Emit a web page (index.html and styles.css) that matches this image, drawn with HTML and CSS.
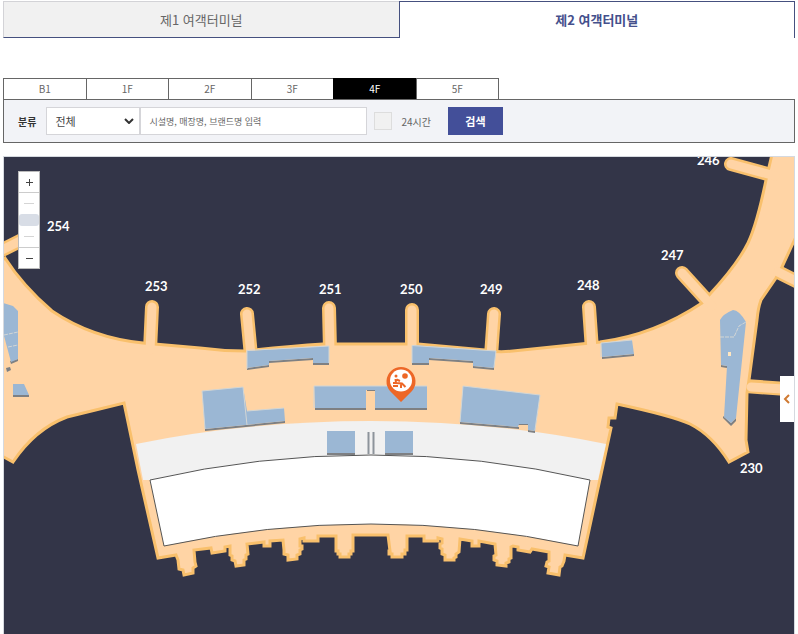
FILE: index.html
```html
<!DOCTYPE html>
<html lang="ko">
<head>
    <meta charset="UTF-8">
    <meta name="viewport" content="width=device-width, initial-scale=1.0">
    <title>여객터미널 지도</title>
    <link rel="stylesheet" href="styles.css">
</head>
<body>
    <nav class="terminals">
        <a href="#t1">제1 여객터미널</a>
        <a href="#t2" class="on">제2 여객터미널</a>
    </nav>

    <nav class="floors">
        <a href="#b1">B1</a>
        <a href="#f1">1F</a>
        <a href="#f2">2F</a>
        <a href="#f3">3F</a>
        <a href="#f4" class="on">4F</a>
        <a href="#f5">5F</a>
    </nav>

    <form class="search">
        <label for="category" class="title">분류</label>
        <select id="category" name="category">
            <option>전체</option>
        </select>
        <input type="text" id="keyword" name="keyword" aria-label="검색어" placeholder="시설명, 매장명, 브랜드명 입력">
        <input type="checkbox" id="allday" name="allday">
        <label for="allday" class="allday">24시간</label>
        <button type="submit">검색</button>
    </form>

    <main class="map">
        <svg class="plan" viewBox="4 157 790 477" role="img" aria-label="4F">
            <!-- boarding bridges, outline -->
            <path class="bridge-edge" d="M152 307 L150 350 M247 314 L251 356 M329 308 L330 350 M412 310 V350 M494 314 L491 356 M589 307 L592 350 M682 273 L712 306 M731 164 L775 176 M0 251 L30 236 M778 272 L800 283 M745 386 L800 390"/>
            <!-- terminal building -->
            <path class="building" d="M0 262 L5 258 Q23 286 52 311 Q92 338 143 343 L200 348 Q222 351 245 351 Q290 346 323 344 H418 L485 350 Q498 353 513 351 L600 342 Q654 335 702 303 L710 294 Q737 265 748 243 Q757 224 766 180 L773 150 H800 V228 L782 267 L776 278 L761 300 Q758 308 757 320 L749 380 L747 393 L746 440 L748 452 L729 462 Q712 435 690 424 Q673 416 617 404 L615 418 H609 L608 427 L611 428 L583 558
                L565 555 L564 561 L562 566 L560 567 L559 575 L548 573 L549 567 L546 566 L547 562 L549 561 L549 552 L532 549 L530 552 L518 550 L518 547 L513 546 L511 547 L511 558 L509 559 V562 L506 563 V566 L497 565 V561 L494 560 V556 L496 555 L495 544 L479 541 V546 H472 V541 L460 539 L459 552 L456 554 V557 L454 558 V560 H445 V555 L442 554 V549 L440 548 V544 L442 543 V539 L438 538 V541 H424 V536 H407 V550 H405 V554 H402 V557 H392 V554 H389 V551 H390 L388 535 H353 V551 H351 V554 H349 V557 H340 V554 H338 V551 H336 V536 H318 V541 H304 V538 L300 539 V546 H302 V549 L300 550 V554 L297 555 V559 L288 560 V555 L284 554 V550 L283 540 L270 541 V546 H264 V542 L247 544 L248 554 L246 555 V559 L244 560 V565 L236 566 L235 561 L232 560 V556 L230 555 L230 546 L225 547 V551 L212 553 L211 548 L194 550 L195 562 L196 566 L193 568 V573 L184 575 L183 570 L179 569 L178 560 L176 555 L158 558
                L138 470 L124 403 L67 417 Q35 429 13 462 L0 455 Z"/>
            <path class="bridge" d="M152 307 L150 350 M247 314 L251 356 M329 308 L330 350 M412 310 V350 M494 314 L491 356 M589 307 L592 350 M682 273 L712 306 M731 164 L775 176 M0 251 L30 236 M778 272 L800 283 M751 387 L800 390"/>
            <path class="hall" d="M136 444 Q250 421 371 421 Q492 421 606 444 L598 480 H143 Z"/>
            <path class="void" d="M150 480 Q258 455 371 455 Q482 455 590 480 L578 546 Q475 524 371 524 Q267 524 164 546 Z"/>

            <!-- shops -->
            <g class="shade">
                <path d="M247 368 L269 365 V367 L247 370 Z M269 361 L313 358 V360 L269 363 Z M313 363 H329 V365 H313 Z"/>
                <path d="M412 363 H429 V365 H412 Z M429 358 L473 361 V363 L429 360 Z M473 366 L494 368 V370 L473 368 Z"/>
                <path d="M205 429 L285 421 V423 L205 431 Z"/>
                <path d="M315 408 H366 V410 H315 Z M375 408 H427 V410 H375 Z M367 390 H375 V391 H367 Z"/>
                <path d="M460 422 L519 427 V429 L460 424 Z M528 430 L535 431 V433 L528 432 Z M518 423 H529 V425 H518 Z"/>
                <path d="M327 453 H355 V455 H327 Z M385 453 H413 V455 H385 Z"/>
                <path d="M602 357 L634 354 V356 L602 359 Z M13 395 H29 V397 H13 Z M10 361 L18 359 V361 L11 364 Z M6 368 L10 367 L11 370 L7 372 Z"/>
                <path d="M721 365 L727 366 V368 L721 367 Z M723 416 L731 423 L736 418 V421 L731 426 L723 418 Z"/>
            </g>
            <g class="shop">
                <path d="M247 351 L329 346 V363 H313 V358 L269 361 V365 L247 368 Z"/>
                <path d="M412 345 L496 351 L494 368 L473 366 V361 L429 358 V363 H412 Z"/>
                <path d="M202 391 L243 387 L247 411 L284 408 L285 421 L205 429 Z"/>
                <path d="M314 386 H375 V390 H366 V408 H315 Z M375 386 H427 V408 H375 Z"/>
                <path d="M463 386 L540 395 L535 431 L528 430 V424 H519 L518 427 L460 422 Z"/>
                <path d="M327 431 H355 V453 H327 Z M385 431 H413 V453 H385 Z"/>
                <path d="M601 343 L632 340 L634 354 L602 357 Z"/>
                <path d="M13 384 H24 L29 395 H13 Z M0 302 L13 306 L18 311 V359 L11 362 L4 336 Z"/>
                <path d="M720 320 Q723 314 733 310 Q739 310 746 322 L736 418 L731 423 L724 417 L727 366 L721 365 Z"/>
            </g>
            <path class="wall" d="M247 369 V350.500 L329 346 V363 M412 363 V345.500 L496 351 L494 367 M205 429 L202 391 L243 387 L247 425 M247 411 L284 408 M460 422 L463 386 L540 395 L535 430 M314 408 V386 H427 M601 357 V343 L632 340"/>
            <path class="wall dashed" d="M720 337 H734 L739 326 L746 322 M4 335 L18 332 M8 347 L18 345"/>
            <path class="gap" d="M728 352 H731 V356 H728 Z"/>
            <path class="rail" d="M368.500 432 V454 M373.500 432 V454"/>

            <g class="gate">
                <text x="697" y="165">246</text>
                <text x="661" y="260">247</text>
                <text x="577" y="290">248</text>
                <text x="480" y="294">249</text>
                <text x="400" y="294">250</text>
                <text x="319" y="294">251</text>
                <text x="238" y="294">252</text>
                <text x="145" y="291">253</text>
                <text x="47" y="231">254</text>
                <text x="740" y="473">230</text>
            </g>

            <!-- facility pin -->
            <g class="pin">
                <path d="M401 402 L390 391 A14.500 14.500 0 1 1 412 391 Z"/>
                <circle class="face" cx="401" cy="380.500" r="11"/>
                <circle cx="405" cy="376" r="2.800"/>
                <circle cx="396" cy="376" r="1.500"/>
                <path class="figure" d="M395.500 379 L396 383 H393 M396 383 L402 383.500 L405.500 387 M396.500 379.500 L400 381 M401 384 V388 M393 386 L398 386"/>
            </g>
        </svg>

        <div class="zoom">
            <button type="button" aria-label="확대">
                <svg viewBox="0 0 9 9"><path d="M1 4.500 H8 M4.500 1 V8"/></svg>
            </button>
            <input type="range" min="1" max="3" value="2" aria-label="배율">
            <button type="button" aria-label="축소">
                <svg viewBox="0 0 9 9"><path d="M1 4.500 H8"/></svg>
            </button>
        </div>
        <button type="button" class="open" aria-label="목록 열기">
            <svg viewBox="0 0 8 10"><path d="M6 1 L2 5 L6 9"/></svg>
        </button>
    </main>
</body>
</html>
```
FILE: styles.css
```css
* {
    box-sizing: border-box;
}
body {
    margin: 0;
    padding: 1px 3px 0;
    background: #fff;
    color: #666;
    font-family: "Noto Sans CJK KR", sans-serif;
    font-size: 10px;
}
a {
    color: inherit;
    text-decoration: none;
}
button, input, select {
    margin: 0;
    font-family: inherit;
}

/* terminal tabs */
.terminals {
    display: flex;
    height: 37px;
    margin-bottom: 40px;
    font-size: 13px;
    line-height: 36px;
    text-align: center;
}
.terminals a {
    flex: 1;
    background: #f1f1f1;
    border: 1px solid #d3d3d7;
    border-right: 0;
    border-bottom-color: #45507f;
}
.terminals a.on {
    background: #fff;
    border: 1px solid #45507f;
    border-bottom: 0;
    color: #45508c;
    font-weight: bold;
}

/* floor tabs */
.floors {
    display: flex;
    width: 63%;
    max-width: 496px;
    line-height: 20px;
    text-align: center;
}
.floors a {
    flex: 1;
    border: 1px solid #666;
    border-right: 0;
    border-bottom: 0;
}
.floors a:last-child {
    border-right: 1px solid #666;
}
.floors a.on {
    background: #000;
    border-color: #000;
    color: #fff;
}

/* search bar */
.search {
    display: flex;
    align-items: center;
    height: 44px;
    margin-bottom: 13px;
    padding: 0 14px;
    background: #f2f3f7;
    border: 1px solid #666;
}
.search .title {
    margin-right: 10px;
    color: #333;
    font-weight: bold;
}
.search select {
    appearance: none;
    width: 94px;
    height: 28px;
    padding: 0 8px;
    border: 1px solid #d5d5d9;
    border-radius: 0;
    background: #fff url("data:image/svg+xml,%3Csvg xmlns='http://www.w3.org/2000/svg' width='10' height='6'%3E%3Cpath d='M1 1l4 4 4-4' fill='none' stroke='%23333' stroke-width='2'/%3E%3C/svg%3E") no-repeat right 5px center;
    color: #444;
    font-size: 11px;
}
.search input[type=text] {
    width: 227px;
    height: 28px;
    padding: 0 8px;
    border: 1px solid #d5d5d9;
    font-size: 9px;
}
.search input::placeholder {
    color: #666;
}
.search input[type=checkbox] {
    appearance: none;
    width: 18px;
    height: 18px;
    margin: 0 9px 0 7px;
    background: #f1f1f1;
    border: 1px solid #ddd;
}
.search button {
    width: 55px;
    height: 28px;
    margin-left: 17px;
    border: 0;
    background: #434f99;
    color: #fff;
    font-size: 11px;
    font-weight: bold;
}

/* map */
.map {
    position: relative;
    border: 1px solid #d5d9df;
    border-bottom: 0;
}
.plan {
    display: block;
    width: 100%;
    background: #333548;
}
.building {
    fill: #ffd4a5;
    stroke: #f9c06c;
    stroke-width: 3;
}
.bridge-edge, .bridge {
    fill: none;
    stroke: #f9c06c;
    stroke-width: 14;
    stroke-linecap: round;
}
.bridge {
    stroke: #ffd4a5;
    stroke-width: 9;
}
.hall {
    fill: #f1f1f1;
}
.void {
    fill: #fff;
    stroke: #555;
}
.shop {
    fill: #9bb7d4;
}
.shade {
    fill: #7e8083;
}
.wall {
    fill: none;
    stroke: #d3d6d4;
}
.dashed {
    stroke-dasharray: 4 1;
}
.gap {
    fill: #ffe6c0;
}
.rail {
    stroke: #8d949b;
    stroke-width: 2;
}
.gate {
    fill: #fff;
    font-family: Lato, sans-serif;
    font-size: 13px;
    font-weight: bold;
}
.pin {
    fill: #ed6727;
}
.pin .face {
    fill: #fff;
}
.pin .figure {
    fill: none;
    stroke: #ed6727;
    stroke-width: 2;
}

/* controls over the map */
.zoom {
    position: absolute;
    top: 14px;
    left: 14px;
    display: flex;
    flex-direction: column;
    width: 22px;
    background: #fff;
    border: 1px solid #bbb;
}
.zoom button {
    height: 20px;
    padding: 0;
    border: 0;
    background: #fff;
}
.zoom svg {
    display: block;
    width: 9px;
    margin: 0 auto;
    fill: none;
    stroke: #444;
}
.zoom input {
    appearance: none;
    writing-mode: vertical-lr;
    width: 20px;
    height: 56px;
    border: 1px solid #ccc;
    border-width: 1px 0;
    background:
        linear-gradient(#d5d5d5, #d5d5d5) center 10px / 10px 1px no-repeat,
        linear-gradient(#d5d5d5, #d5d5d5) center 43px / 10px 1px no-repeat;
}
.zoom input::-webkit-slider-thumb {
    appearance: none;
    width: 20px;
    height: 12px;
    background: #d8dde6;
    border-radius: 3px;
}
.open {
    position: absolute;
    top: 46%;
    right: 0;
    width: 14px;
    height: 46px;
    padding: 0;
    border: 0;
    background: #fff;
}
.open svg {
    display: block;
    width: 8px;
    margin: 0 auto;
    fill: none;
    stroke: #d07a32;
    stroke-width: 2;
}
```
